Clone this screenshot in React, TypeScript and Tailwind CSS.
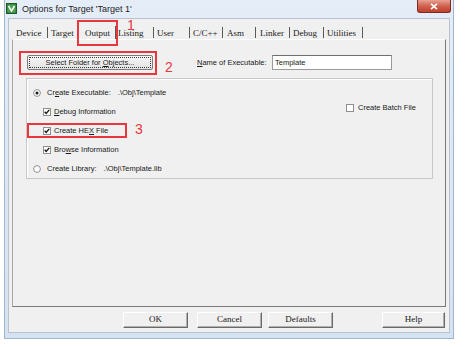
import React from "react";

const Check = ({ checked }: { checked?: boolean }) => (
  <svg width="8" height="8" viewBox="0 0 8 8" className="shrink-0">
    <rect x="0.5" y="0.5" width="7" height="7" fill="#fff" stroke="#8e8f8f" />
    {checked && (
      <path d="M1.7 3.7 L3.2 5.4 L6.3 1.9" stroke="#1a1a1a" strokeWidth="1.4" fill="none" />
    )}
  </svg>
);

const Radio = ({ checked }: { checked?: boolean }) => (
  <svg width="8" height="8" viewBox="0 0 8 8" className="shrink-0">
    <circle cx="4" cy="4" r="3.4" fill="#fff" stroke="#8e8f8f" />
    {checked && <circle cx="4" cy="4" r="1.5" fill="#1a1a1a" />}
  </svg>
);

const Sep = ({ tall }: { tall?: boolean }) => (
  <div className={tall ? "w-[1px] h-[13px] bg-[#5a5a5a] shrink-0" : "w-[1px] h-[11px] bg-[#5a5a5a] shrink-0"} />
);

const BtnClassic = ({ label, cls }: { label: string; cls: string }) => (
  <div
    className={
      "h-[16px] flex items-center justify-center border border-t-white border-l-white border-r-[#6a6a6a] border-b-[#6a6a6a] shadow-[inset_-1px_-1px_0_#b0b0b0] bg-[#f0f0f0] font-['Liberation_Serif',serif] text-[9px] text-[#1a1a1a] " +
      cls
    }
  >
    {label}
  </div>
);

export default function App() {
  return (
    <div className="relative w-[467px] h-[347px] bg-white overflow-hidden font-['Liberation_Sans',Arial,sans-serif]">
      <div className="ml-[4px] w-[450px] h-[339px] flex flex-col bg-[linear-gradient(#e4edf8,#d5e2f2)] border-x border-b border-[#9fb4cf]">
        {/* Title bar */}
        <div className="h-[18px] flex items-start shrink-0">
          <div className="ml-[1px] mt-[3px]">
            <svg width="11" height="11" viewBox="0 0 11 11">
              <rect x="0.5" y="0.5" width="10" height="10" fill="#2f7d3a" stroke="#1d5a26" />
              <rect x="1.5" y="1.5" width="8" height="8" fill="#4aa14f" />
              <path d="M2.5 3 L5.5 8 L8.5 3" stroke="#fff" strokeWidth="1.5" fill="none" />
            </svg>
          </div>
          <span className="ml-[5px] mt-[3px] text-[9px] leading-[12px] text-[#1e1e1e]">
            Options for Target 'Target 1'
          </span>
          <div className="ml-auto mr-[2px] w-[34px] h-[13px] rounded-b-[3px] border border-t-0 border-[#7e2a22] bg-[linear-gradient(#e8a193,#d0624f_50%,#c0402e)] flex items-center justify-center">
            <svg width="8" height="7" viewBox="0 0 8 7">
              <path d="M1 0.8 L7 6.2 M7 0.8 L1 6.2" stroke="#fff" strokeWidth="1.6" />
            </svg>
          </div>
        </div>

        {/* Client */}
        <div className="mx-[3px] h-[315px] bg-[#f0f0f0] border border-[#b9c3cf] flex flex-col">
          {/* Tabs */}
          <div className="mt-[7px] h-[13px] pl-[7px] flex items-center font-['Liberation_Serif',serif] text-[9px] leading-[12px] text-[#1a1a1a]">
            <span className="w-[31px]">Device</span>
            <Sep />
            <span className="ml-[3px] w-[34px]">Target</span>
            <span className="w-[30px]">Output</span>
            <Sep tall />
            <span className="ml-[2px] w-[35px]">Listing</span>
            <Sep />
            <span className="ml-[3px] w-[32px]">User</span>
            <Sep />
            <span className="ml-[3px] w-[29px]">C/C++</span>
            <Sep />
            <span className="ml-[4px] w-[28px]">Asm</span>
            <Sep />
            <span className="ml-[4px] w-[29px]">Linker</span>
            <Sep />
            <span className="ml-[3px] w-[30px]">Debug</span>
            <Sep />
            <span className="ml-[3px] w-[35px]">Utilities</span>
            <Sep />
          </div>

          {/* Panel */}
          <div className="ml-[3px] w-[434px] h-[268px] border border-t-white border-l-[#a8a8a8] border-r-[#7a7a7a] border-b-[#7a7a7a] flex flex-col text-[7.5px] leading-[10px] text-[#1a1a1a]">
            <div className="mt-[15px] pl-[14px] flex items-center">
              <div className="w-[126px] h-[15px] rounded-[2px] border border-[#7d7d7d] bg-[linear-gradient(#f7f7f7,#e2e2e2)] p-[1px]">
                <div className="w-full h-full border border-dotted border-[#3a3a3a] flex items-center justify-center">
                  <span>
                    Select Folder for <span className="underline">O</span>bjects...
                  </span>
                </div>
              </div>
              <span className="ml-[44px] w-[75px]">
                <span className="underline">N</span>ame of Executable:
              </span>
              <div className="w-[120px] h-[15px] border border-[#9a9a9a] border-t-[#6f6f6f] bg-white flex items-center pl-[2px]">
                Template
              </div>
            </div>

            {/* Group box */}
            <div className="ml-[13px] mt-[8px] w-[407px] h-[101px] border border-[#c8c8c8] shadow-[inset_1px_1px_0_#fff] flex">
              <div className="w-[313px] pt-[4px] pl-[6px] flex flex-col">
                <div className="h-[19px] flex items-center">
                  <Radio checked />
                  <span className="ml-[6px]">
                    Cr<span className="underline">e</span>ate Executable:
                  </span>
                  <span className="ml-[7px]">.\Obj\Template</span>
                </div>
                <div className="h-[19px] flex items-center pl-[10px]">
                  <Check checked />
                  <span className="ml-[3px]">
                    <span className="underline">D</span>ebug Information
                  </span>
                </div>
                <div className="h-[19px] flex items-center pl-[10px]">
                  <Check checked />
                  <span className="ml-[3px]">
                    Create HE<span className="underline">X</span> File
                  </span>
                </div>
                <div className="h-[19px] flex items-center pl-[10px]">
                  <Check checked />
                  <span className="ml-[3px]">
                    Bro<span className="underline">w</span>se Information
                  </span>
                </div>
                <div className="h-[19px] flex items-center">
                  <Radio />
                  <span className="ml-[6px]">Create Library:</span>
                  <span className="ml-[7px]">.\Obj\Template.lib</span>
                </div>
              </div>
              <div className="pl-[6px] mt-[19px] h-[19px] flex items-center">
                <Check />
                <span className="ml-[4px]">Create Batch File</span>
              </div>
            </div>
          </div>

          {/* Bottom buttons */}
          <div className="mt-[5px] flex">
            <BtnClassic label="OK" cls="ml-[114px] w-[65px]" />
            <BtnClassic label="Cancel" cls="ml-[9px] w-[65px]" />
            <BtnClassic label="Defaults" cls="ml-[6px] w-[65px]" />
            <BtnClassic label="Help" cls="ml-[49px] w-[63px]" />
          </div>
        </div>
      </div>

      {/* Annotations */}
      <div className="absolute left-[77px] top-[20px] w-[41px] h-[26px] border-2 border-[#e8383d]" />
      <span className="absolute left-[127px] top-[18px] text-[14px] leading-[14px] text-[#e8383d]">1</span>
      <div className="absolute left-[19px] top-[51px] w-[138px] h-[24px] border-2 border-[#e8383d]" />
      <span className="absolute left-[165px] top-[60px] text-[14px] leading-[14px] text-[#e8383d]">2</span>
      <div className="absolute left-[27px] top-[123px] w-[100px] h-[15px] border-2 border-[#e8383d]" />
      <span className="absolute left-[135px] top-[122px] text-[14px] leading-[14px] text-[#e8383d]">3</span>
    </div>
  );
}
